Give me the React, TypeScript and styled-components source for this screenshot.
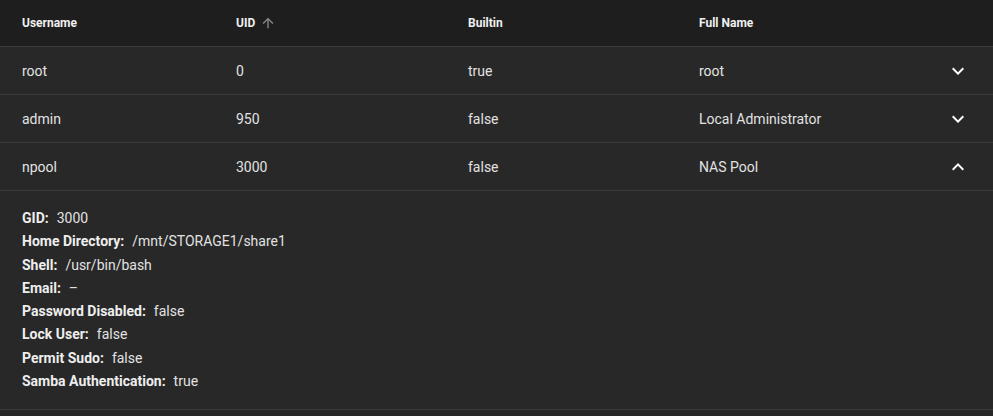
import styled, { createGlobalStyle } from 'styled-components';

const GlobalStyle = createGlobalStyle`
	html, body {
		margin: 0;
		padding: 0;
		background-color: #282828;
	}
	body {
		font-family: Roboto, 'Liberation Sans', Arial, sans-serif;
		color: #e6e6e6;
	}
`;

const Table = styled.div`
	width: 993px;
	background-color: #282828;
`;

const Row = styled.div<{ $header?: boolean }>`
	display: grid;
	grid-template-columns: 214px 232px 231px 1fr 70px;
	align-items: center;
	height: ${(p) => (p.$header ? '46px' : '47px')};
	padding-left: 22px;
	background-color: ${(p) => (p.$header ? '#1e1e1e' : '#282828')};
	border-bottom: 1px solid #3a3a3a;
	font-size: ${(p) => (p.$header ? '12px' : '14px')};
	font-weight: ${(p) => (p.$header ? 700 : 400)};
	color: ${(p) => (p.$header ? '#f0f0f0' : '#e2e2e2')};
`;

const Cell = styled.div`
	display: flex;
	align-items: center;
	gap: 5px;
	white-space: nowrap;
`;

const ToggleCell = styled.div`
	display: flex;
	justify-content: center;
	align-items: center;
`;

const Details = styled.div`
	padding: 16px 22px;
	border-bottom: 1px solid #3a3a3a;
	font-size: 14px;
	line-height: 23.3px;
	color: #e2e2e2;
`;

const DetailLine = styled.div`
	white-space: nowrap;
`;

const Label = styled.span`
	font-weight: 700;
	color: #eeeeee;
	margin-right: 8px;
`;

const SortArrow = () => (
	<svg width="16" height="16" viewBox="0 0 24 24" fill="#8a8a8a">
		<path d="M4 12l1.41 1.41L11 7.83V20h2V7.83l5.58 5.59L20 12l-8-8-8 8z" />
	</svg>
);

const Chevron = ({ up }: { up?: boolean }) => (
	<svg width="24" height="24" viewBox="0 0 24 24" fill="#ffffff">
		{up ? (
			<path d="M7.41 15.41 12 10.83l4.59 4.58L18 14l-6-6-6 6z" />
		) : (
			<path d="M7.41 8.59 12 13.17l4.59-4.58L18 10l-6 6-6-6z" />
		)}
	</svg>
);

const users = [
	{ name: 'root', uid: '0', builtin: 'true', full: 'root', open: false },
	{ name: 'admin', uid: '950', builtin: 'false', full: 'Local Administrator', open: false },
	{ name: 'npool', uid: '3000', builtin: 'false', full: 'NAS Pool', open: true },
];

const details = [
	['GID:', '3000'],
	['Home Directory:', '/mnt/STORAGE1/share1'],
	['Shell:', '/usr/bin/bash'],
	['Email:', '–'],
	['Password Disabled:', 'false'],
	['Lock User:', 'false'],
	['Permit Sudo:', 'false'],
	['Samba Authentication:', 'true'],
];

const App = () => {
	return (
		<>
			<GlobalStyle />
			<Table>
				<Row $header>
					<Cell>Username</Cell>
					<Cell>
						UID <SortArrow />
					</Cell>
					<Cell>Builtin</Cell>
					<Cell>Full Name</Cell>
					<div />
				</Row>
				{users.map((u) => (
					<div key={u.name}>
						<Row>
							<Cell>{u.name}</Cell>
							<Cell>{u.uid}</Cell>
							<Cell>{u.builtin}</Cell>
							<Cell>{u.full}</Cell>
							<ToggleCell>
								<Chevron up={u.open} />
							</ToggleCell>
						</Row>
						{u.open && (
							<Details>
								{details.map(([label, value]) => (
									<DetailLine key={label}>
										<Label>{label}</Label>
										{value}
									</DetailLine>
								))}
							</Details>
						)}
					</div>
				))}
			</Table>
		</>
	);
};

export default App;
